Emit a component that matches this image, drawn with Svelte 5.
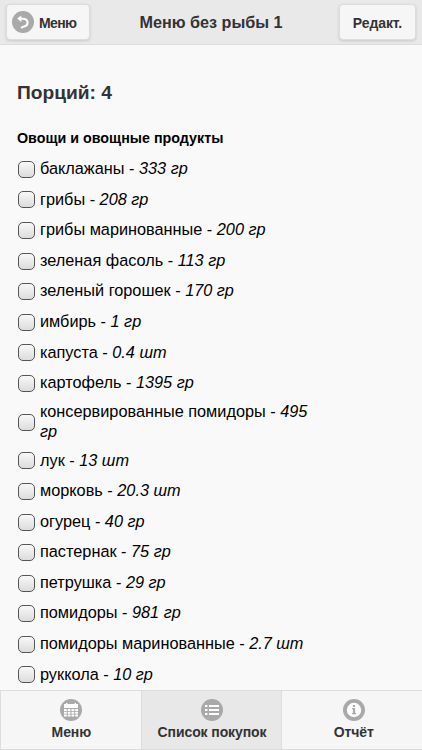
<script lang="ts">
	type Item = { name: string; amount: string }

	const items: Item[] = [
		{ name: 'баклажаны', amount: '333 гр' },
		{ name: 'грибы', amount: '208 гр' },
		{ name: 'грибы маринованные', amount: '200 гр' },
		{ name: 'зеленая фасоль', amount: '113 гр' },
		{ name: 'зеленый горошек', amount: '170 гр' },
		{ name: 'имбирь', amount: '1 гр' },
		{ name: 'капуста', amount: '0.4 шт' },
		{ name: 'картофель', amount: '1395 гр' },
		{ name: 'консервированные помидоры', amount: '495 гр' },
		{ name: 'лук', amount: '13 шт' },
		{ name: 'морковь', amount: '20.3 шт' },
		{ name: 'огурец', amount: '40 гр' },
		{ name: 'пастернак', amount: '75 гр' },
		{ name: 'петрушка', amount: '29 гр' },
		{ name: 'помидоры', amount: '981 гр' },
		{ name: 'помидоры маринованные', amount: '2.7 шт' },
		{ name: 'руккола', amount: '10 гр' }
	]

	const tabs = [
		{ id: 'menu', label: 'Меню' },
		{ id: 'list', label: 'Список покупок' },
		{ id: 'info', label: 'Отчёт' }
	]

	let active = $state('list')
</script>

<div class="page">
	<header>
		<button class="btn back">
			<svg viewBox="0 0 22 22" width="22" height="22">
				<circle cx="11" cy="11" r="11" fill="#a9a9a9" />
				<path d="M9.4 4.4v6.6L5 7.4z" fill="#fff" />
				<path d="M8.5 7.5l4 .6a3.7 3.7 0 0 1 .4 7.2c-1.2.2-2.6.6-3.8 1.6" fill="none" stroke="#fff" stroke-width="2" />
			</svg>
			<span>Меню</span>
		</button>
		<h1>Меню без рыбы 1</h1>
		<button class="btn edit">Редакт.</button>
	</header>

	<main>
		<h2>Порций: 4</h2>
		<h3>Овощи и овощные продукты</h3>
		<ul>
			{#each items as item}
				<li>
					<label>
						<input type="checkbox" />
						<span class="text">{item.name} - <em>{item.amount}</em></span>
					</label>
				</li>
			{/each}
		</ul>
	</main>

	<nav>
		{#each tabs as tab}
			<button class="tab" class:active={active === tab.id} onclick={() => (active = tab.id)}>
				<svg viewBox="0 0 22 22" width="22" height="22">
					<circle cx="11" cy="11" r="11" fill="#a9a9a9" />
					{#if tab.id === 'menu'}
						<path
							d="M4 5h2v-1h1.4v1h7.2v-1H16v1h2v4H4zM4 10h2.8v2H4zm3.7 0h2.8v2H7.7zm3.8 0h2.8v2h-2.8zm3.7 0H18v2h-2.8zM4 12.8h2.8v2H4zm3.7 0h2.8v2H7.7zm3.8 0h2.8v2h-2.8zm3.7 0H18v2h-2.8zM4 15.6h2.8v2H4zm3.7 0h2.8v2H7.7zm3.8 0h2.8v2h-2.8zm3.7 0H18v2h-2.8z"
							fill="#fff"
						/>
					{:else if tab.id === 'list'}
						<path d="M4 7h2.4M4 11h2.4M4 15h2.4M8 7h10M8 11h10M8 15h10" stroke="#fff" stroke-width="2" />
					{:else}
						<circle cx="11" cy="11" r="7.2" fill="#fff" />
						<path d="M9.9 6h2.2v1.9H9.9zM9 9h3.1v5H13v1.2H9V14h.9v-3.8H9z" fill="#a9a9a9" />
					{/if}
				</svg>
				<span>{tab.label}</span>
			</button>
		{/each}
	</nav>
</div>

<style>
	:global(body) {
		margin: 0;
		background: #f9f9f9;
	}

	.page {
		display: flex;
		flex-direction: column;
		height: 750px;
		overflow: hidden;
		font-family: 'Liberation Sans', Arial, sans-serif;
		color: #333;
		background: #f9f9f9;
	}

	header {
		display: grid;
		grid-template-columns: 84px 1fr 84px;
		align-items: center;
		box-sizing: border-box;
		height: 45px;
		flex: none;
		padding: 0 6px;
		background: #e9e9e9;
		border-bottom: 1px solid #ddd;
	}

	button {
		margin: 0;
		font: bold 14px 'Liberation Sans', Arial, sans-serif;
		letter-spacing: -0.1px;
		color: #333;
	}

	.btn {
		display: flex;
		align-items: center;
		box-sizing: border-box;
		height: 36px;
		padding: 1px 0 0;
		background: #f6f6f6;
		border: 1px solid #ddd;
		border-radius: 4px;
		box-shadow: 0 1px 3px rgba(0, 0, 0, 0.15);
	}

	.back {
		gap: 5px;
		padding: 0 0 0 5px;
		letter-spacing: -0.6px;
	}

	.back span {
		padding-top: 1px;
	}

	.edit {
		justify-self: end;
		width: 77px;
		justify-content: center;
	}

	h1 {
		margin: 0;
		padding-top: 1px;
		font-size: 16.2px;
		text-align: center;
	}

	main {
		flex: 1;
		min-height: 0;
		overflow: hidden;
		padding: 0 17px;
	}

	h2 {
		margin: 36px 0 0;
		font-size: 19.2px;
		line-height: 24px;
	}

	h3 {
		margin: 24px 0 0;
		font-size: 14.3px;
		line-height: 18px;
		color: #000;
	}

	ul {
		width: 300px;
		margin: 5.7px 0 0;
		padding: 0;
		list-style: none;
	}

	label {
		display: flex;
		align-items: center;
		box-sizing: border-box;
		min-height: 30.6px;
		padding: 3.4px 0;
	}

	input {
		appearance: none;
		flex: none;
		box-sizing: border-box;
		width: 17px;
		height: 17px;
		margin: 2.6px 5px 0 1px;
		background: linear-gradient(#f8f8f8, #dcdcdc);
		border: 1px solid #555;
		border-radius: 5px;
	}

	.text {
		font-size: 16.3px;
		line-height: 20px;
		color: #000;
	}

	nav {
		display: grid;
		grid-template-columns: repeat(3, 1fr);
		flex: none;
		box-sizing: border-box;
		height: 60px;
		border-top: 1px solid #ddd;
		border-bottom: 1px solid #ddd;
	}

	.tab {
		display: flex;
		flex-direction: column;
		align-items: center;
		gap: 3px;
		padding: 8px 0 0 1px;
		background: #f6f6f6;
		border: 0;
		border-left: 1px solid #ddd;
	}

	.tab:last-child {
		padding-left: 3px;
	}

	.tab.active {
		background: #e8e8e8;
	}
</style>
